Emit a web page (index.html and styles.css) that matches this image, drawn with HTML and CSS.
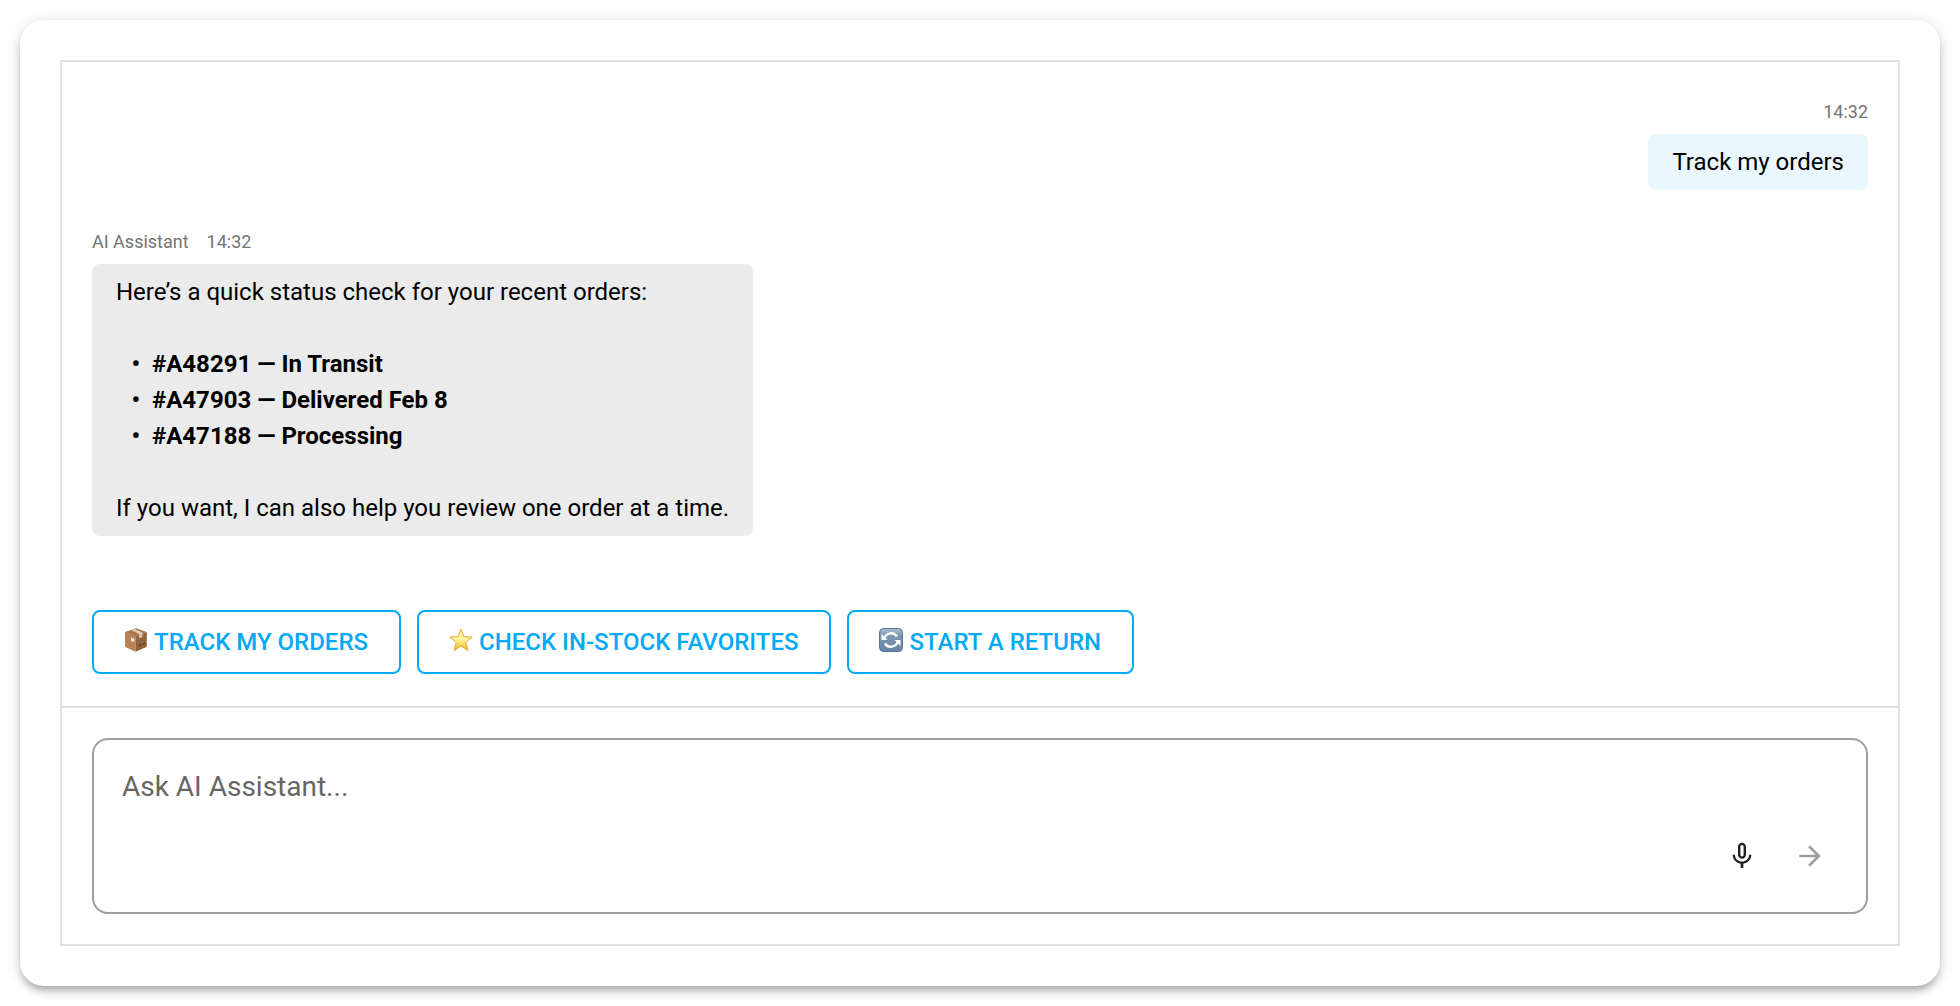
FILE: index.html
```html
<!DOCTYPE html>
<html lang="en">
<head>
  <meta charset="UTF-8">
  <meta name="viewport" content="width=device-width, initial-scale=1.0">
  <title>AI Assistant</title>
  <link rel="stylesheet" href="styles.css">
</head>
<body>
  <main class="card">
    <div class="chat">
      <section class="messages">
        <div class="message message-user">
          <div class="meta"><time>14:32</time></div>
          <div class="bubble">Track my orders</div>
        </div>

        <div class="message">
          <div class="meta"><span>AI Assistant</span><time>14:32</time></div>
          <div class="bubble">
            <p>Here’s a quick status check for your recent orders:</p>
            <ul>
              <li>#A48291 — In Transit</li>
              <li>#A47903 — Delivered Feb 8</li>
              <li>#A47188 — Processing</li>
            </ul>
            <p>If you want, I can also help you review one order at a time.</p>
          </div>
        </div>

        <div class="suggestions">
          <button type="button" class="suggestion">
            <svg class="emoji" viewBox="0 0 24 24" aria-hidden="true">
              <path fill="#b98256" d="M1 4 11.500 8v15.700L2 19.200Q1 18.700 1 17.700z"/>
              <path fill="#93633d" d="M11.500 8 22.800 4v13.700q0 1-1 1.500l-10.300 4.500z"/>
              <path fill="#a5754c" d="M1 4 12 .200 22.800 4 11.500 8.500z"/>
              <path fill="#d8c6b0" d="M7 2 10.500.700 18.500 4.500v4.500l-3.300 1.300V6.200z"/>
              <path fill="#e4e2df" d="m7 9.500 3.300 1.300v3.400L7 13z"/>
              <path fill="#5d3a20" d="m15.500 16.500 1.700-.700v2l-1.700.700zm3.300-1.300 2-.800v2l-2 .800z"/>
            </svg>
            Track my orders
          </button>
          <button type="button" class="suggestion">
            <svg class="emoji" viewBox="0 0 24 24" aria-hidden="true">
              <defs>
                <linearGradient id="star-fill" x1="0" y1="0" x2="0" y2="1">
                  <stop offset="0" stop-color="#fff3a8"/>
                  <stop offset=".5" stop-color="#fff59a"/>
                  <stop offset="1" stop-color="#f2b211"/>
                </linearGradient>
              </defs>
              <path fill="url(#star-fill)" stroke="#e5a93a" stroke-width="1" stroke-linejoin="round" d="m12 1 2.900 7.700 8.400.400-6.600 5.200 2.300 8.300-7-4.700-7 4.700 2.300-8.300L.700 9.100l8.400-.400z"/>
            </svg>
            Check in-stock favorites
          </button>
          <button type="button" class="suggestion">
            <svg class="emoji" viewBox="0 0 24 24" aria-hidden="true">
              <defs>
                <linearGradient id="return-fill" x1="0" y1="0" x2="0" y2="1">
                  <stop offset="0" stop-color="#a9bccf"/>
                  <stop offset=".3" stop-color="#7f9ab5"/>
                  <stop offset="1" stop-color="#6482a2"/>
                </linearGradient>
              </defs>
              <rect x=".5" y=".5" width="23" height="23" rx="4" fill="url(#return-fill)" stroke="#587492"/>
              <path fill="none" stroke="#fff" stroke-width="2.500" d="M5.200 10.500C7 4.500 15 3.500 18 8.500M18.800 13.500C17 19.500 9 20.500 6 15.500"/>
              <path fill="#fff" d="M2.500 12V6L8.500 12zM21.500 12v6l-6-6z"/>
            </svg>
            Start a return
          </button>
        </div>
      </section>

      <form class="composer">
        <div class="composer-box">
          <textarea aria-label="Message" placeholder="Ask AI Assistant..."></textarea>
          <div class="composer-actions">
            <button type="button" class="icon-button" aria-label="Record voice message">
              <svg viewBox="0 0 24 24"><path d="M12 14c1.660 0 2.990-1.340 2.990-3L15 5c0-1.660-1.340-3-3-3S9 3.340 9 5v6c0 1.660 1.340 3 3 3m-1.200-9.100c0-.660.540-1.200 1.200-1.200s1.200.540 1.200 1.200l-.010 6.200c0 .660-.530 1.200-1.190 1.200s-1.200-.540-1.200-1.200zm6.500 6.100c0 3-2.540 5.100-5.300 5.100S6.700 14 6.700 11H5c0 3.410 2.720 6.230 6 6.720V21h2v-3.280c3.280-.480 6-3.300 6-6.720z"/></svg>
            </button>
            <button type="submit" class="icon-button" aria-label="Send" disabled>
              <svg viewBox="0 0 24 24"><path d="m12 4-1.410 1.410L16.170 11H4v2h12.170l-5.580 5.590L12 20l8-8z"/></svg>
            </button>
          </div>
        </div>
      </form>
    </div>
  </main>
</body>
</html>
```
FILE: styles.css
```css
* {
  box-sizing: border-box;
}

body {
  margin: 0;
  padding: 20px;
  background-color: #fff;
  color: #000;
  font-family: Roboto, "Liberation Sans", sans-serif;
  font-size: 24px;
  line-height: 36px;
}

.card {
  padding: 40px;
  border-radius: 24px;
  background-color: #fff;
  box-shadow: 0 6px 6px -4px rgba(0, 0, 0, 0.2), 0 6px 8px rgba(0, 0, 0, 0.14), 0 2px 16px rgba(0, 0, 0, 0.12);
}

.chat {
  border: 2px solid #e0e0e0;
}

.messages {
  display: flex;
  flex-direction: column;
  gap: 38px;
  padding: 36px 30px 32px;
}

.message {
  display: flex;
  flex-direction: column;
  align-items: flex-start;
  gap: 8px;
}

.message-user {
  align-items: flex-end;
}

.meta {
  display: flex;
  gap: 18px;
  color: #757575;
  font-size: 18px;
  line-height: 28px;
}

.bubble {
  padding: 10px 24px;
  border-radius: 8px;
  background-color: #ebebeb;
}

.message-user .bubble {
  background-color: #eaf7fe;
}

.bubble p {
  margin: 0;
}

.bubble ul {
  margin: 36px 0;
  padding-left: 36px;
  list-style-type: "•  ";
  font-weight: 700;
}

.suggestions {
  display: flex;
  flex-wrap: wrap;
  gap: 16px;
  padding-top: 36px;
}

.suggestion {
  display: flex;
  align-items: center;
  gap: 6px;
  height: 64px;
  padding: 0 31px 0 30px;
  border: 2px solid #03a9f4;
  border-radius: 8px;
  background-color: #fff;
  color: #03a9f4;
  font: inherit;
  font-weight: 500;
  text-transform: uppercase;
  cursor: pointer;
}

.emoji {
  width: 24px;
  height: 24px;
  margin-bottom: 4px;
}

.composer {
  padding: 30px;
  border-top: 2px solid #e0e0e0;
}

.composer-box {
  padding: 28px;
  border: 2px solid #9e9e9e;
  border-radius: 16px;
}

.composer textarea {
  display: block;
  width: 100%;
  height: 60px;
  padding: 0;
  border: 0;
  outline: 0;
  resize: none;
  background: none;
  color: #000;
  font: inherit;
  font-size: 28px;
  line-height: 38px;
}

.composer textarea::placeholder {
  color: #666;
}

.composer-actions {
  display: flex;
  justify-content: flex-end;
  gap: 12px;
}

.icon-button {
  display: flex;
  align-items: center;
  justify-content: center;
  width: 56px;
  height: 56px;
  padding: 0;
  border: 0;
  border-radius: 50%;
  background: none;
  color: #212121;
  cursor: pointer;
}

.icon-button:disabled {
  color: #9e9e9e;
  cursor: default;
}

.icon-button svg {
  width: 32px;
  height: 32px;
  fill: currentColor;
}
```
